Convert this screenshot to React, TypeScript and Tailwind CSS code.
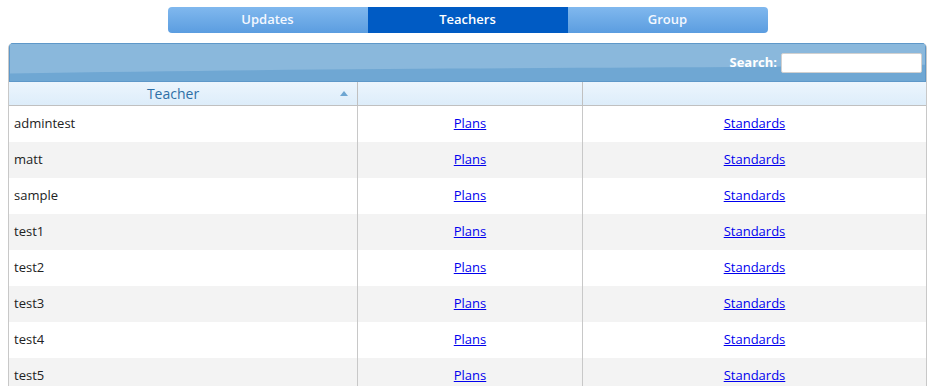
import React from "react";

const teachers = ["admintest", "matt", "sample", "test1", "test2", "test3", "test4", "test5"];
const tabs = ["Updates", "Teachers", "Group"];

export default function App() {
  return (
    <div className="h-[386px] w-[935px] overflow-hidden bg-white font-['Open_Sans',sans-serif] text-[13px] text-[#222]">
      <div className="flex justify-center pt-[7px]">
        <div className="flex h-[26px] w-[600px] overflow-hidden rounded-[4px] bg-gradient-to-b from-[#80b8ee] to-[#5b9de0]">
          {tabs.map((t) => (
            <div
              key={t}
              className={
                t === "Teachers"
                  ? "flex w-[200px] items-center justify-center bg-[#005bc4] text-[13px] font-semibold text-white"
                  : "flex w-[200px] items-center justify-center text-[13px] font-semibold text-[#f4f8ff]"
              }
            >
              {t}
            </div>
          ))}
        </div>
      </div>

      <div className="mx-[8px] mt-[10px] w-[919px] overflow-hidden rounded-t-[5px] border-x border-[#c8c8c8]">
        <div className="relative flex h-[39px] items-center justify-end border border-[#5e98c9] bg-[#6fa7d3] pr-[3px]">
          <svg className="absolute inset-0 h-full w-full" viewBox="0 0 919 39" preserveAspectRatio="none">
            <path d="M0 0 H919 V22 C700 26 400 24 0 31 Z" fill="#8ab8dc" />
          </svg>
          <label className="relative mr-[4px] text-[13px] font-bold text-white">Search:</label>
          <input className="relative h-[20px] w-[141px] rounded-[2px] border border-[#d0d0d0] bg-white" />
        </div>
        <div className="flex h-[24px] border-b border-[#c0c0c0] bg-gradient-to-b from-[#ecf5fd] to-[#ddedfa]">
          <div className="relative flex w-[349px] items-center justify-center border-r border-[#c0c0c0] pr-[20px] text-[14px] text-[#2e6fa6]">
            Teacher
            <span className="absolute right-[9px] top-[9px] h-0 w-0 border-x-[4px] border-b-[5px] border-x-transparent border-b-[#6ea6d2]" />
          </div>
          <div className="w-[225px] border-r border-[#c0c0c0]" />
          <div className="flex-1" />
        </div>
        {teachers.map((name, i) => (
          <div key={name} className={i % 2 === 0 ? "flex h-[36px] bg-white" : "flex h-[36px] bg-[#f3f3f3]"}>
            <div className="flex w-[349px] items-center border-r border-[#c8c8c8] pl-[5px]">{name}</div>
            <div className="flex w-[225px] items-center justify-center border-r border-[#c8c8c8]">
              <a href="#" className="text-[#0000ee] underline">Plans</a>
            </div>
            <div className="flex flex-1 items-center justify-center">
              <a href="#" className="text-[#0000ee] underline">Standards</a>
            </div>
          </div>
        ))}
      </div>
    </div>
  );
}
